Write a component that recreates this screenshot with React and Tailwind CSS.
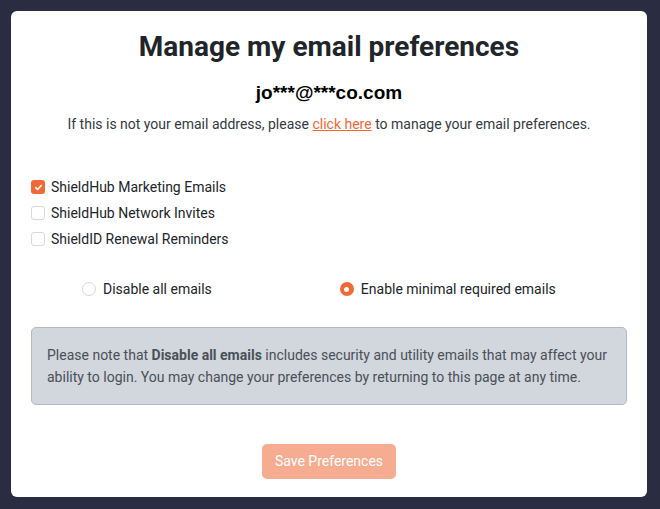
import React, { useState } from 'react'

const ORANGE = '#f06a37'

const Checkbox = ({ checked, label, onChange }) => (
  <label className="flex h-[26px] items-center gap-[6px] cursor-pointer">
    <span
      className={
        checked
          ? 'flex h-[14px] w-[14px] items-center justify-center rounded-[3px] bg-[#f06a37]'
          : 'flex h-[14px] w-[14px] items-center justify-center rounded-[3px] border border-[#d6d9dd] bg-white'
      }
      onClick={onChange}
    >
      {checked && (
        <svg width="9" height="9" viewBox="0 0 10 10" fill="none">
          <path d="M2 5.2l2 2 4-4.4" stroke="#fff" strokeWidth="1.8" strokeLinecap="round" strokeLinejoin="round" />
        </svg>
      )}
    </span>
    <span className="text-[14px] text-[#212529]">{label}</span>
  </label>
)

const Radio = ({ checked, label, onChange }) => (
  <label className="flex h-[26px] items-center gap-[7px] cursor-pointer" onClick={onChange}>
    <span
      className={
        checked
          ? 'flex h-[14px] w-[14px] items-center justify-center rounded-full bg-[#f06a37]'
          : 'flex h-[14px] w-[14px] items-center justify-center rounded-full border border-[#d6d9dd] bg-white'
      }
    >
      {checked && <span className="h-[5px] w-[5px] rounded-full bg-white" />}
    </span>
    <span className="text-[14px] text-[#212529]">{label}</span>
  </label>
)

const App = () => {
  const [prefs, setPrefs] = useState({ marketing: true, network: false, renewal: false })
  const [mode, setMode] = useState('minimal')

  const toggle = (key) => setPrefs(p => ({ ...p, [key]: !p[key] }))

  return (
    <div className="h-[509px] w-[660px] overflow-hidden bg-[#2a2c41] p-[11px]" style={{ fontFamily: 'Roboto, "Liberation Sans", sans-serif' }}>
      <div className="flex h-[486px] w-[636px] flex-col rounded-md bg-white px-5 pt-[19px]">
        <h1 className="text-center text-[28px] font-bold leading-[34px] text-[#212529]">
          Manage my email preferences
        </h1>
        <div
          className="mt-[17px] text-center text-[19px] font-bold leading-[23px] text-black"
          style={{ fontFamily: '"Liberation Sans", Arial, sans-serif' }}
        >
          jo***@***co.com
        </div>
        <p className="mt-[10px] text-center text-[14px] leading-[21px] text-[#343a40]">
          If this is not your email address, please{' '}
          <a href="#" className="text-[#f06a37] underline">click here</a>{' '}
          to manage your email preferences.
        </p>

        <div className="mt-[39px] flex flex-col">
          <Checkbox checked={prefs.marketing} label="ShieldHub Marketing Emails" onChange={() => toggle('marketing')} />
          <Checkbox checked={prefs.network} label="ShieldHub Network Invites" onChange={() => toggle('network')} />
          <Checkbox checked={prefs.renewal} label="ShieldID Renewal Reminders" onChange={() => toggle('renewal')} />
        </div>

        <div className="mt-[24px] flex gap-[128px] pl-[51px]">
          <Radio checked={mode === 'disable'} label="Disable all emails" onChange={() => setMode('disable')} />
          <Radio checked={mode === 'minimal'} label="Enable minimal required emails" onChange={() => setMode('minimal')} />
        </div>

        <div className="mt-[25px] rounded-[5px] border border-[#b4bac1] bg-[#d2d6dd] px-[15px] py-[16px] text-[14px] leading-[22px] text-[#495057]">
          Please note that <strong className="font-bold">Disable all emails</strong> includes security and utility emails that may affect your ability to login. You may change your preferences by returning to this page at any time.
        </div>

        <div className="mt-[39px] flex justify-center">
          <button
            className="h-[35px] rounded-[5px] px-[13px] text-[14px] text-white"
            style={{ backgroundColor: ORANGE, opacity: 0.55 }}
            disabled
          >
            Save Preferences
          </button>
        </div>
      </div>
    </div>
  )
}

export default App
